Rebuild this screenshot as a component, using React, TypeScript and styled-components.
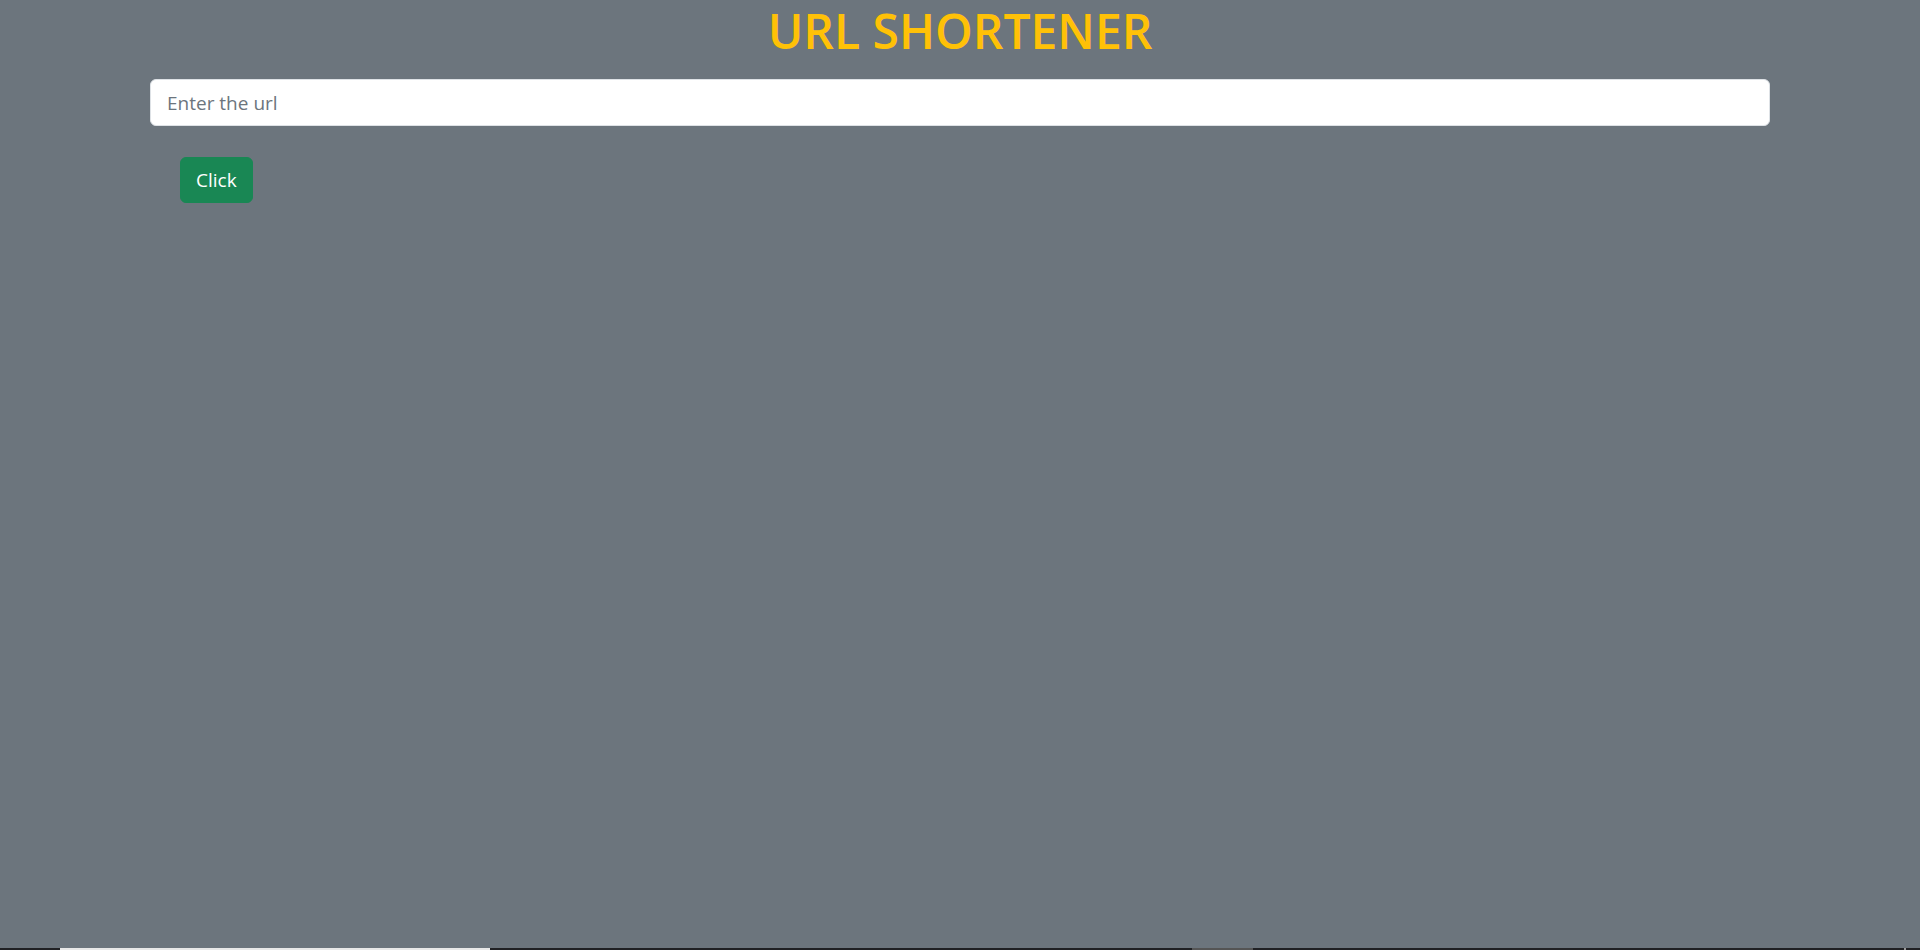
import React from "react";
import styled, { createGlobalStyle } from "styled-components";

const GlobalStyle = createGlobalStyle`
  html, body {
    margin: 0;
    padding: 0;
    background: #6c757d;
  }
  body {
    font-family: "Open Sans", "Noto Sans", Arial, sans-serif;
    -webkit-font-smoothing: antialiased;
  }
  * { box-sizing: border-box; }
`;

const Page = styled.div`
  min-height: 100vh;
  display: flex;
  flex-direction: column;
  background: #6c757d;
`;

const Main = styled.main`
  flex: 1;
  display: flex;
  flex-direction: column;
  align-items: center;
`;

const Title = styled.h1`
  margin: 0;
  padding-top: 2px;
  font-size: 48px;
  line-height: 58px;
  font-weight: 600;
  color: #ffc107;
  text-align: center;
`;

const Form = styled.form`
  width: 1620px;
  margin-top: 19px;
  display: flex;
  flex-direction: column;
  align-items: flex-start;
`;

const UrlInput = styled.input`
  width: 100%;
  height: 47px;
  padding: 0 16px;
  border: 1px solid #dee2e6;
  border-radius: 6px;
  background: #fff;
  font-family: inherit;
  font-size: 19px;
  color: #212529;
  outline: none;
  &::placeholder {
    color: #6c757d;
  }
`;

const SubmitButton = styled.button`
  margin: 31px 0 0 30px;
  height: 46px;
  padding: 0 15px;
  border: 1px solid #198754;
  border-radius: 6px;
  background: #198754;
  color: #fff;
  font-family: inherit;
  font-size: 19px;
  cursor: pointer;
`;

const BottomStrip = styled.div`
  height: 2px;
  display: flex;
  background: #202124;
`;

const StripSegment = styled.div<{ $left: number; $width: number; $color: string }>`
  margin-left: ${(p) => p.$left}px;
  width: ${(p) => p.$width}px;
  background: ${(p) => p.$color};
`;

export default function App() {
  return (
    <Page>
      <GlobalStyle />
      <Main>
        <Title>URL SHORTENER</Title>
        <Form onSubmit={(e) => e.preventDefault()}>
          <UrlInput type="text" placeholder="Enter the url" />
          <SubmitButton type="submit">Click</SubmitButton>
        </Form>
      </Main>
      <BottomStrip>
        <StripSegment $left={60} $width={430} $color="#e8e8e8" />
        <StripSegment $left={702} $width={61} $color="#555555" />
        <StripSegment $left={651} $width={2} $color="#9a9a9a" />
      </BottomStrip>
    </Page>
  );
}
